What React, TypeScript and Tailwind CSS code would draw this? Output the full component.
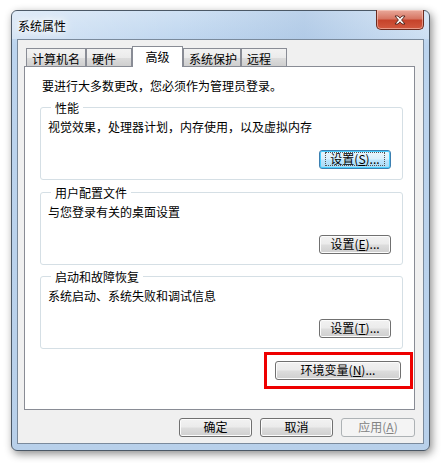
import React from 'react';

const FONT = "font-['Noto_Sans_CJK_SC','Noto_Sans',sans-serif]";

const btnBase =
  'h-[19px] rounded-[3px] border text-[12px] leading-[14px] flex items-center justify-center';
const btnNormal =
  'border-[#707070] text-black bg-[linear-gradient(#f2f2f2_0%,#ebebeb_48%,#dddddd_52%,#cfcfcf_100%)] shadow-[inset_0_0_0_1px_#fcfcfc]';

const Btn = ({ label, width, focused, disabled }: { label: React.ReactNode; width: string; focused?: boolean; disabled?: boolean }) => {
  if (disabled) {
    return (
      <div className={`${btnBase} ${width} border-[#adb2b5] bg-[#f4f4f4] text-[#838383]`}>{label}</div>
    );
  }
  if (focused) {
    return (
      <div
        className={`${btnBase} ${width} border-[#3c7fb1] bg-[linear-gradient(#eaf6fd_0%,#d9f0fc_48%,#bee6fd_52%,#a7d9f5_100%)] shadow-[inset_0_0_0_1px_#48cfff]`}
      >
        <span className="border border-dotted border-[#555] px-[4px] leading-[12px]">{label}</span>
      </div>
    );
  }
  return <div className={`${btnBase} ${width} ${btnNormal}`}>{label}</div>;
};

const Group = ({ title, desc, btn }: { title: string; desc: string; btn: React.ReactNode }) => (
  <fieldset className="ml-[15px] w-[363px] border border-[#d5dfe5] rounded-[3px] pl-[7px] pr-[11px] pb-[10px]">
    <legend className="ml-[3px] px-[4px] text-[12px] leading-[14px]">{title}</legend>
    <div className="mt-[5px] text-[12px] leading-[14px]">{desc}</div>
    <div className="mt-[16px] flex justify-end">{btn}</div>
  </fieldset>
);

const Tab = ({ label, width, selected }: { label: string; width: string; selected?: boolean }) =>
  selected ? (
    <div
      className={`${width} h-[21px] -mb-px border border-b-0 border-[#898c95] bg-white text-[12px] leading-[14px] flex items-start justify-center pt-[3px] relative z-10`}
    >
      {label}
    </div>
  ) : (
    <div
      className={`${width} h-[18px] border border-b-0 border-[#898c95] bg-[linear-gradient(#f2f2f2_0%,#ebebeb_50%,#dddddd_51%,#cfcfcf_100%)] text-[12px] leading-[14px] pl-[5px] pt-[3px]`}
    >
      {label}
    </div>
  );

const CloseX = () => (
  <svg width="14" height="10" viewBox="0 0 14 10">
    <path
      d="M2 1 L5 1 L7 3.2 L9 1 L12 1 L8.6 5 L12 9 L9 9 L7 6.8 L5 9 L2 9 L5.4 5 Z"
      fill="#fff"
      stroke="#4a2018"
      strokeWidth="0.9"
      strokeLinejoin="round"
    />
  </svg>
);

export default function App() {
  return (
    <div className={`w-[441px] h-[463px] bg-white overflow-hidden ${FONT}`}>
      <div className="ml-[11px] mt-[10px] w-[419px] h-[441px] rounded-[6px] border border-[#4b5866] bg-[linear-gradient(180deg,#cfe1f4_0%,#bcd4ee_8%,#b8d0ea_100%)] shadow-[2px_3px_8px_rgba(0,0,0,0.45)] flex flex-col px-[5px] pb-[6px]">
        <div className="h-[28px] flex items-start justify-between bg-[linear-gradient(90deg,rgba(255,255,255,0.35)_0%,rgba(255,255,255,0)_40%,rgba(150,180,215,0.35)_70%,rgba(255,255,255,0.2)_100%)] -mx-[5px] px-[5px] rounded-t-[5px]">
          <div className="mt-[8px] ml-[1px] text-[12px] leading-[14px] text-black [text-shadow:0_0_6px_#fff,0_0_10px_#fff,0_0_14px_#fff]">
            系统属性
          </div>
          <div className="-mt-px w-[48px] h-[20px] rounded-b-[5px] border border-t-0 border-[#6b2a1e] bg-[linear-gradient(#e9a99b_0%,#d77764_45%,#c6432b_55%,#d2593f_100%)] shadow-[inset_0_0_0_1px_rgba(255,220,210,0.5)] flex items-center justify-center">
            <CloseX />
          </div>
        </div>
        <div className="h-[406px] border border-[#7a8a9c] bg-[#f0f0f0] pl-[6px] pr-[8px] pt-[6px] flex flex-col">
          <div className="ml-[2px] flex items-end h-[20px]">
            <Tab label="计算机名" width="w-[60px]" />
            <Tab label="硬件" width="w-[46px]" />
            <Tab label="高级" width="w-[51px]" selected />
            <Tab label="系统保护" width="w-[58px]" />
            <Tab label="远程" width="w-[46px]" />
          </div>
          <div className="w-[391px] h-[344px] border border-[#898c95] bg-white flex flex-col">
            <div className="mt-[12px] ml-[17px] text-[12px] leading-[14px]">
              要进行大多数更改，您必须作为管理员登录。
            </div>
            <div className="mt-[8px]">
              <Group
                title="性能"
                desc="视觉效果，处理器计划，内存使用，以及虚拟内存"
                btn={<Btn width="w-[72px]" focused label={<>设置(<u>S</u>)...</>} />}
              />
            </div>
            <div className="mt-[6px]">
              <Group
                title="用户配置文件"
                desc="与您登录有关的桌面设置"
                btn={<Btn width="w-[72px]" label={<>设置(<u>E</u>)...</>} />}
              />
            </div>
            <div className="mt-[5px]">
              <Group
                title="启动和故障恢复"
                desc="系统启动、系统失败和调试信息"
                btn={<Btn width="w-[72px]" label={<>设置(<u>T</u>)...</>} />}
              />
            </div>
            <div className="mt-[12px] mr-[13px] flex justify-end">
              <div className="relative">
                <Btn width="w-[126px]" label={<>环境变量(<u>N</u>)...</>} />
                <div className="absolute -left-[11px] -top-[9px] -right-[12px] -bottom-[9px] border-[3px] border-[#ee0000] pointer-events-none" />
              </div>
            </div>
          </div>
          <div className="mt-[8px] flex justify-end gap-[8px]">
            <Btn width="w-[73px]" label="确定" />
            <Btn width="w-[73px]" label="取消" />
            <Btn width="w-[74px]" disabled label={<>应用(<u>A</u>)</>} />
          </div>
        </div>
      </div>
    </div>
  );
}
